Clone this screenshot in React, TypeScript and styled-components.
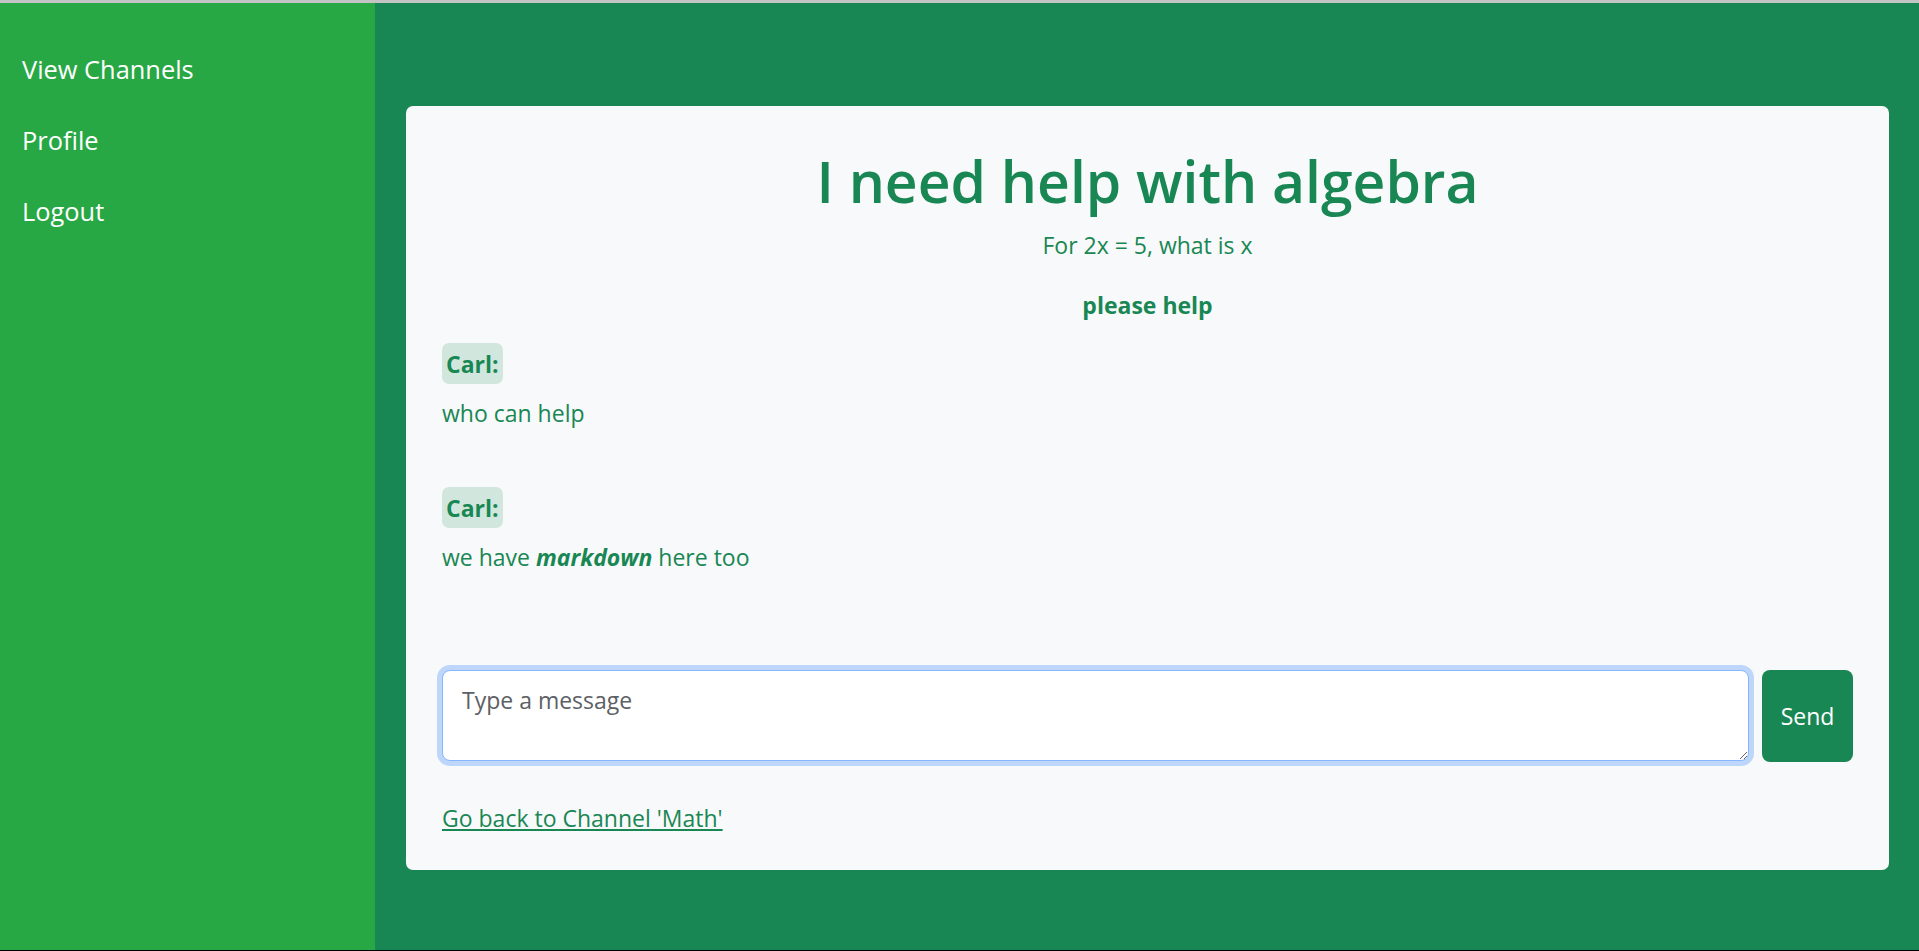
import React from "react";
import styled, { createGlobalStyle } from "styled-components";

const GlobalStyle = createGlobalStyle`
  html, body {
    margin: 0;
    padding: 0;
  }
  body {
    font-family: "Open Sans", "Noto Sans", sans-serif;
    background: #198754;
  }
  * {
    box-sizing: border-box;
  }
`;

const Page = styled.div`
  display: flex;
  height: 951px;
  border-top: 3px solid #c4c4c4;
  border-bottom: 1px solid #000;
`;

const Sidebar = styled.nav`
  width: 375px;
  flex: none;
  background: #28a745;
  padding-top: 31px;
  display: flex;
  flex-direction: column;
`;

const NavLink = styled.a`
  display: block;
  padding: 0 22px;
  line-height: 71px;
  font-size: 25.4px;
  color: #ffffff;
  text-decoration: none;
`;

const Main = styled.main`
  flex: 1;
  background: #198754;
  padding: 103px 30px 0 31px;
`;

const Card = styled.section`
  background: #f8f9fa;
  border-radius: 7px;
  padding: 40px 36px 35px;
  color: #198754;
`;

const Title = styled.h1`
  margin: 0;
  text-align: center;
  font-size: 57px;
  font-weight: 600;
  line-height: 70px;
`;

const Subtitle = styled.p`
  margin: 12px 0 0;
  text-align: center;
  font-size: 23px;
  line-height: 34px;
`;

const Lead = styled.p`
  margin: 26px 0 0;
  text-align: center;
  font-size: 23px;
  font-weight: 700;
  line-height: 34px;
`;

const MessageList = styled.div`
  margin-top: 21px;
  display: flex;
  flex-direction: column;
  gap: 57px;
  padding-bottom: 96px;
`;

const Message = styled.div`
  display: flex;
  flex-direction: column;
  align-items: flex-start;
  gap: 12px;
`;

const Author = styled.span`
  display: inline-block;
  background: #d1e7dd;
  border-radius: 7px;
  padding: 2px 4px 0;
  height: 41px;
  line-height: 39px;
  font-size: 23px;
  font-weight: 700;
`;

const Body = styled.p`
  margin: 0;
  font-size: 23px;
  line-height: 34px;
`;

const InputRow = styled.div`
  display: flex;
  align-items: flex-start;
  gap: 13px;
`;

const TextArea = styled.textarea`
  flex: 1;
  height: 91px;
  padding: 12px 19px;
  font-family: "Open Sans", "Noto Sans", sans-serif;
  font-size: 23px;
  line-height: 34px;
  color: #212529;
  background: #ffffff;
  border: 1px solid #86b7fe;
  border-radius: 8px;
  box-shadow: 0 0 0 5px rgba(13, 110, 253, 0.25);
  outline: none;
  &::placeholder {
    color: #5d6064;
  }
`;

const SendButton = styled.button`
  width: 91px;
  height: 92px;
  flex: none;
  background: #198754;
  color: #ffffff;
  border: none;
  border-radius: 8px;
  font-family: "Open Sans", "Noto Sans", sans-serif;
  font-size: 23px;
  cursor: pointer;
`;

const BackLink = styled.a`
  display: inline-block;
  margin-top: 39px;
  font-size: 23px;
  line-height: 34px;
  color: #198754;
  text-decoration: underline;
`;

export default function App() {
  return (
    <>
      <GlobalStyle />
      <Page>
        <Sidebar>
          <NavLink href="#">View Channels</NavLink>
          <NavLink href="#">Profile</NavLink>
          <NavLink href="#">Logout</NavLink>
        </Sidebar>
        <Main>
          <Card>
            <Title>I need help with algebra</Title>
            <Subtitle>For 2x = 5, what is x</Subtitle>
            <Lead>please help</Lead>
            <MessageList>
              <Message>
                <Author>Carl:</Author>
                <Body>who can help</Body>
              </Message>
              <Message>
                <Author>Carl:</Author>
                <Body>
                  we have <strong><em>markdown</em></strong> here too
                </Body>
              </Message>
            </MessageList>
            <InputRow>
              <TextArea placeholder="Type a message" />
              <SendButton>Send</SendButton>
            </InputRow>
            <div>
              <BackLink href="#">Go back to Channel 'Math'</BackLink>
            </div>
          </Card>
        </Main>
      </Page>
    </>
  );
}
